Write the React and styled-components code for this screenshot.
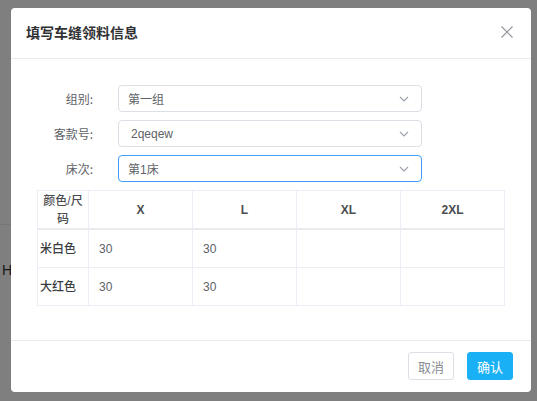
import React from "react";
import styled, { createGlobalStyle } from "styled-components";

const GlobalStyle = createGlobalStyle`
  html, body {
    margin: 0;
    padding: 0;
    width: 537px;
    height: 401px;
    overflow: hidden;
    background: #ffffff;
    font-family: "Liberation Sans", "Noto Sans CJK SC", sans-serif;
  }
`;

const Page = styled.div`
  position: relative;
  width: 537px;
  height: 401px;
`;

// 뒤쪽 페이지 (오버레이 아래로 살짝 보임)
const BehindText = styled.span`
  position: absolute;
  left: 2px;
  top: 262px;
  font-size: 14px;
  color: #303133;
`;

const BehindLine = styled.div`
  position: absolute;
  left: 0;
  top: 224px;
  width: 40px;
  border-top: 1px solid #ebeef5;
`;

const Overlay = styled.div`
  position: absolute;
  inset: 0;
  background: rgba(0, 0, 0, 0.5);
  display: flex;
  align-items: flex-start;
  justify-content: flex-start;
  padding: 8px 0 0 11px;
  box-sizing: border-box;
`;

const Dialog = styled.div`
  width: 520px;
  height: 384px;
  background: #fff;
  border-radius: 4px;
  display: flex;
  flex-direction: column;
  box-sizing: border-box;
`;

const Header = styled.div`
  display: flex;
  align-items: center;
  justify-content: space-between;
  height: 51px;
  padding: 0 18px 2px 15px;
  border-bottom: 1px solid #e8eaee;
  box-sizing: border-box;
`;

const Title = styled.div`
  font-size: 14px;
  font-weight: 700;
  color: #303133;
  font-family: "Noto Sans CJK SC", sans-serif;
`;

const CloseBtn = styled.div`
  width: 12px;
  height: 12px;
  display: flex;
  cursor: pointer;
`;

const Body = styled.div`
  flex: 1;
  padding: 26px 26px 0 26px;
  display: flex;
  flex-direction: column;
`;

const Form = styled.div`
  display: flex;
  flex-direction: column;
  gap: 8px;
  margin-bottom: 8px;
`;

const FormRow = styled.div`
  display: flex;
  align-items: center;
`;

const Label = styled.div`
  width: 81px;
  padding-right: 25px;
  box-sizing: border-box;
  text-align: right;
  font-size: 12px;
  color: #606266;
  font-family: "Noto Sans CJK SC", sans-serif;
`;

const Select = styled.div`
  width: 304px;
  height: 27px;
  box-sizing: border-box;
  border: 1px solid ${({ focused }) => (focused ? "#409eff" : "#dcdfe6")};
  border-radius: 4px;
  display: flex;
  align-items: center;
  justify-content: space-between;
  padding: 0 12px 0 ${({ pad }) => pad}px;
  font-size: 12px;
  color: #606266;
`;

const Table = styled.div`
  display: grid;
  grid-template-columns: 51px repeat(4, 1fr);
  width: 468px;
  border-top: 1px solid #ebeef5;
  border-left: 1px solid #ebeef5;
  box-sizing: border-box;
`;

const Cell = styled.div`
  border-right: 1px solid #ebeef5;
  border-bottom: ${({ head }) => (head ? "2px solid #e9ebef" : "1px solid #ebeef5")};
  height: ${({ head }) => (head ? "39px" : "38px")};
  box-sizing: border-box;
  display: flex;
  align-items: center;
  justify-content: ${({ head }) => (head ? "center" : "flex-start")};
  text-align: center;
  padding: ${({ first }) => (first ? "0 2px" : "0 10px")};
  font-size: 12px;
  line-height: 18px;
  font-weight: ${({ head, first }) => (head && !first ? 700 : first ? 500 : 400)};
  color: ${({ head, first }) => (head ? "#4a4c50" : first ? "#3a3c40" : "#606266")};
`;

const Footer = styled.div`
  height: 52px;
  border-top: 1px solid #e8eaee;
  display: flex;
  align-items: center;
  justify-content: flex-end;
  gap: 13px;
  padding: 0 18px 1px 0;
  box-sizing: border-box;
`;

const Button = styled.div`
  height: 28px;
  padding: 0 9px;
  box-sizing: border-box;
  display: flex;
  align-items: center;
  border-radius: 3px;
  font-size: 13px;
  font-family: "Noto Sans CJK SC", sans-serif;
  cursor: pointer;
  border: 1px solid ${({ primary }) => (primary ? "#1ab0f5" : "#dcdfe6")};
  background: ${({ primary }) => (primary ? "#1ab0f5" : "#fff")};
  color: ${({ primary }) => (primary ? "#fff" : "#8a8d93")};
`;

const Chevron = () => (
  <svg width="10" height="6" viewBox="0 0 10 6">
    <path d="M1 1 L5 5 L9 1" fill="none" stroke="#9ea3ad" strokeWidth="1.2" />
  </svg>
);

const fields = [
  { label: "组别:", value: "第一组", pad: 9 },
  { label: "客款号:", value: "2qeqew", pad: 12 },
  { label: "床次:", value: "第1床", pad: 9, focused: true },
];

const sizes = ["X", "L", "XL", "2XL"];
const rows = [
  { color: "米白色", values: ["30", "30", "", ""] },
  { color: "大红色", values: ["30", "30", "", ""] },
];

export default function App() {
  return (
    <Page>
      <GlobalStyle />
      <BehindLine />
      <BehindText>HY</BehindText>
      <Overlay>
        <Dialog>
          <Header>
            <Title>填写车缝领料信息</Title>
            <CloseBtn>
              <svg width="12" height="12" viewBox="0 0 12 12">
                <path d="M0.5 0.5 L11.5 11.5 M11.5 0.5 L0.5 11.5" stroke="#909399" strokeWidth="1.1" />
              </svg>
            </CloseBtn>
          </Header>
          <Body>
            <Form>
              {fields.map((f) => (
                <FormRow key={f.label}>
                  <Label>{f.label}</Label>
                  <Select focused={f.focused} pad={f.pad}>
                    <span>{f.value}</span>
                    <Chevron />
                  </Select>
                </FormRow>
              ))}
            </Form>
            <Table>
              <Cell head first>颜色/尺码</Cell>
              {sizes.map((s) => (
                <Cell head key={s}>{s}</Cell>
              ))}
              {rows.map((r) => (
                <React.Fragment key={r.color}>
                  <Cell first>{r.color}</Cell>
                  {r.values.map((v, i) => (
                    <Cell key={i}>{v}</Cell>
                  ))}
                </React.Fragment>
              ))}
            </Table>
          </Body>
          <Footer>
            <Button>取消</Button>
            <Button primary>确认</Button>
          </Footer>
        </Dialog>
      </Overlay>
    </Page>
  );
}
